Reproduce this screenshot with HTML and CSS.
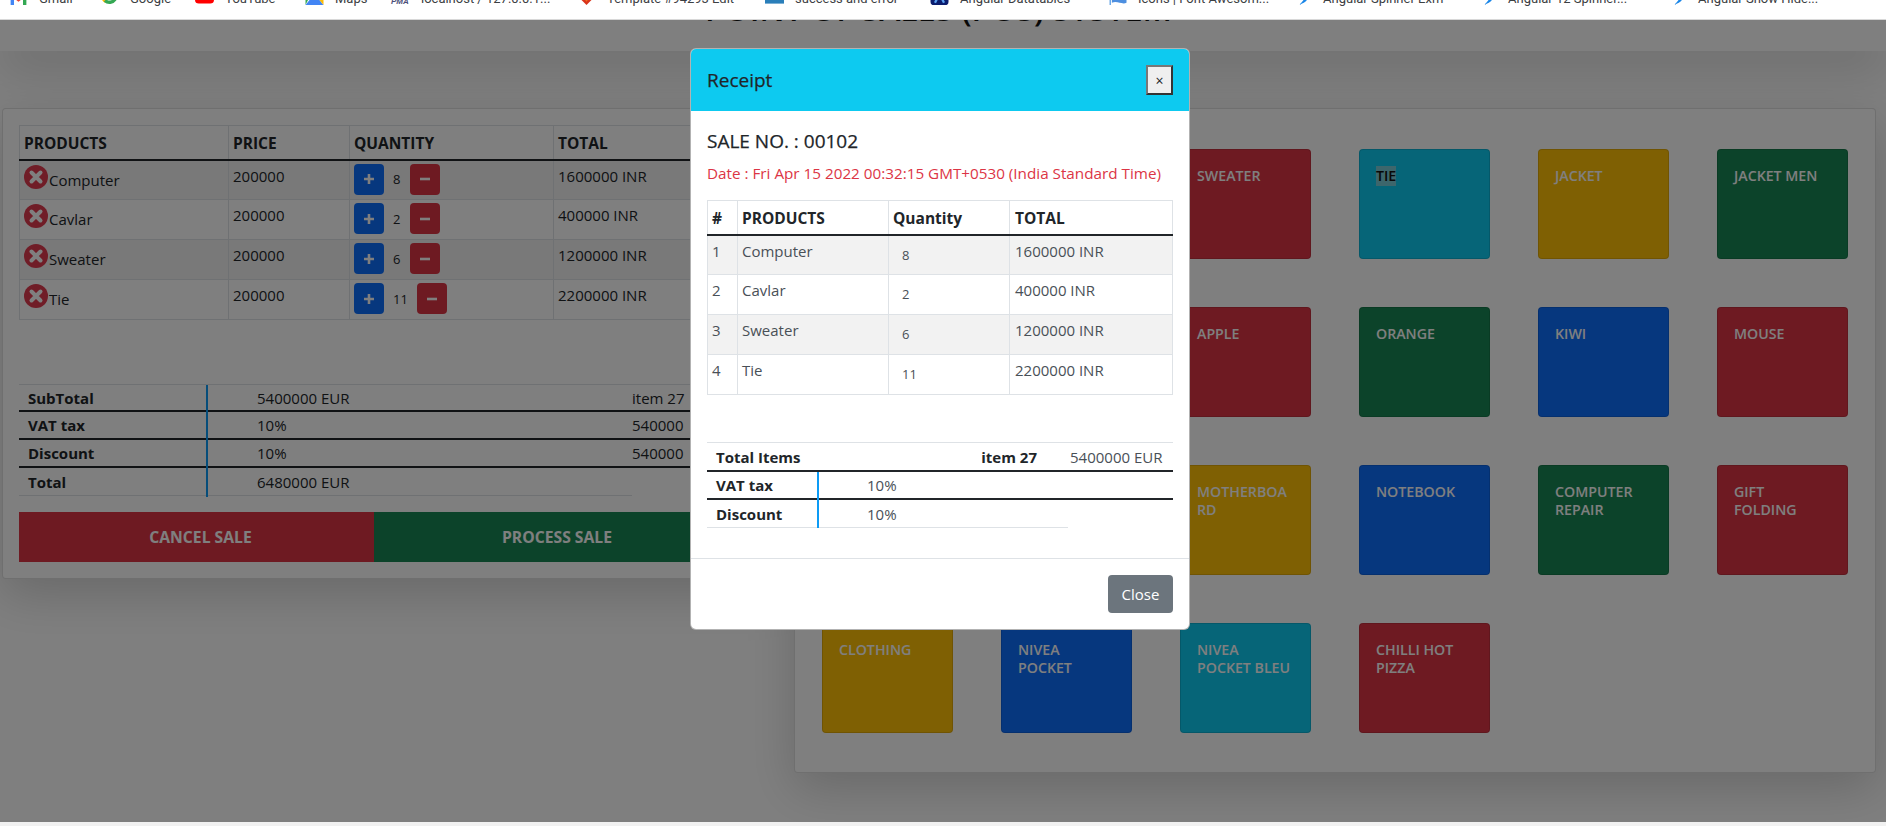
FILE: index.html
```html
<!DOCTYPE html>
<html lang="en">
<head>
<meta charset="utf-8">
<title>Point of Sales (POS) System</title>
<link rel="stylesheet" href="styles.css">
</head>
<body>
<div class="app">
  <nav class="bookmarks">
    <a class="bm"><svg class="fav" viewBox="0 0 16 16"><path d="M1 16V5l3 2v9z" fill="#4285f4"/><path d="M15 16V5l-3 2v9z" fill="#34a853"/><path d="M1 5l7 5 7-5v3l-7 5-7-5z" fill="#ea4335"/></svg><span>Gmail</span></a>
    <a class="bm"><svg class="fav" viewBox="0 0 16 16"><path d="M2 8a6 6 0 0 0 3 5" fill="none" stroke="#fbbc05" stroke-width="3"/><path d="M4 12a6 6 0 0 0 9-1" fill="none" stroke="#34a853" stroke-width="3"/></svg><span>Google</span></a>
    <a class="bm"><svg class="fav fav-yt" viewBox="0 0 20 16"><rect x="0" y="0" width="20" height="16" rx="4" fill="#ff0000"/></svg><span>YouTube</span></a>
    <a class="bm"><svg class="fav" viewBox="0 0 16 16"><path d="M0 16L8 6l8 10z" fill="#4285f4"/><path d="M0 16V9l5-3z" fill="#34a853"/><path d="M8 6l8 10V6z" fill="#fbbc05"/></svg><span>Maps</span></a>
    <a class="bm bm-pma"><span class="pma">PMA</span><span>localhost / 127.0.0.1...</span></a>
    <a class="bm"><svg class="fav" viewBox="0 0 16 16"><path d="M0 8l8 8 8-8z" fill="#d9341b"/><path d="M4 8l4 5 4-5z" fill="#f26b1d"/></svg><span>Template #94293 Edit</span></a>
    <a class="bm"><svg class="fav fav-sq" viewBox="0 0 20 16"><rect width="20" height="16" fill="#2a7fba"/></svg><span>success and error</span></a>
    <a class="bm"><svg class="fav" viewBox="0 0 16 16"><rect width="16" height="16" rx="3" fill="#0b1c6e"/><path d="M4 14l4-8 4 8" fill="none" stroke="#5aa0f0" stroke-width="2"/></svg><span>Angular Datatables</span></a>
    <a class="bm"><svg class="fav" viewBox="0 0 16 16"><path d="M1 0h1v16H1z" fill="#3d8ce0"/><path d="M3 0h13v14c-4 2-8-2-13 0z" fill="#4d8fe0"/></svg><span>Icons | Font Awesom...</span></a>
    <a class="bm"><svg class="fav fav-sw" viewBox="0 0 13 18"><path d="M6 11h3c-1 3-4 5-9 7 2-2 4-4 6-7z" fill="#1a86e8"/></svg><span>Angular Spinner Exm</span></a>
    <a class="bm"><svg class="fav fav-sw" viewBox="0 0 13 18"><path d="M6 11h3c-1 3-4 5-9 7 2-2 4-4 6-7z" fill="#1a86e8"/></svg><span>Angular 12 Spinner...</span></a>
    <a class="bm"><svg class="fav fav-sw" viewBox="0 0 13 18"><path d="M6 11h3c-1 3-4 5-9 7 2-2 4-4 6-7z" fill="#1a86e8"/></svg><span>Angular Show Hide...</span></a>
  </nav>

  <div class="page">
    <header class="page-head"><h1 class="page-title">POINT OF SALES (POS) SYSTEM</h1></header>
    <main class="pos">
      <section class="card cart">
        <table class="grid-table cart-table">
          <colgroup><col class="c-name"><col class="c-price"><col class="c-qty"><col></colgroup>
          <thead><tr><th>PRODUCTS</th><th>PRICE</th><th>QUANTITY</th><th>TOTAL</th></tr></thead>
          <tbody>
            <tr><td><div class="name-cell"><svg class="remove" viewBox="0 0 24 24"><circle cx="12" cy="12" r="12"/><path d="M7.5 7.5l9 9M16.5 7.5l-9 9"/></svg><span>Computer</span></div></td><td>200000</td><td><div class="qty"><button class="qbtn plus"><svg viewBox="0 0 12 12"><path d="M6 1v10M1 6h10"/></svg></button><span class="qnum">8</span><button class="qbtn minus"><svg viewBox="0 0 12 12"><path d="M1 6h10"/></svg></button></div></td><td>1600000 INR</td></tr>
            <tr><td><div class="name-cell"><svg class="remove" viewBox="0 0 24 24"><circle cx="12" cy="12" r="12"/><path d="M7.5 7.5l9 9M16.5 7.5l-9 9"/></svg><span>Cavlar</span></div></td><td>200000</td><td><div class="qty"><button class="qbtn plus"><svg viewBox="0 0 12 12"><path d="M6 1v10M1 6h10"/></svg></button><span class="qnum">2</span><button class="qbtn minus"><svg viewBox="0 0 12 12"><path d="M1 6h10"/></svg></button></div></td><td>400000 INR</td></tr>
            <tr><td><div class="name-cell"><svg class="remove" viewBox="0 0 24 24"><circle cx="12" cy="12" r="12"/><path d="M7.5 7.5l9 9M16.5 7.5l-9 9"/></svg><span>Sweater</span></div></td><td>200000</td><td><div class="qty"><button class="qbtn plus"><svg viewBox="0 0 12 12"><path d="M6 1v10M1 6h10"/></svg></button><span class="qnum">6</span><button class="qbtn minus"><svg viewBox="0 0 12 12"><path d="M1 6h10"/></svg></button></div></td><td>1200000 INR</td></tr>
            <tr><td><div class="name-cell"><svg class="remove" viewBox="0 0 24 24"><circle cx="12" cy="12" r="12"/><path d="M7.5 7.5l9 9M16.5 7.5l-9 9"/></svg><span>Tie</span></div></td><td>200000</td><td><div class="qty"><button class="qbtn plus"><svg viewBox="0 0 12 12"><path d="M6 1v10M1 6h10"/></svg></button><span class="qnum">11</span><button class="qbtn minus"><svg viewBox="0 0 12 12"><path d="M1 6h10"/></svg></button></div></td><td>2200000 INR</td></tr>
          </tbody>
        </table>

        <table class="sum-table">
          <colgroup><col class="s-label"><col class="s-val"><col></colgroup>
          <tbody>
            <tr><th>SubTotal</th><td>5400000 EUR</td><td class="s-extra">item 27</td></tr>
            <tr><th>VAT tax</th><td>10%</td><td class="s-extra">540000</td></tr>
            <tr><th>Discount</th><td>10%</td><td class="s-extra">540000</td></tr>
            <tr class="s-last"><th>Total</th><td>6480000 EUR</td><td class="s-extra"></td></tr>
          </tbody>
        </table>

        <div class="sale-actions">
          <button class="sale-btn cancel">CANCEL SALE</button>
          <button class="sale-btn process">PROCESS SALE</button>
        </div>
      </section>

      <section class="card catalog">
        <div class="tile red"></div><div class="tile yellow"></div><div class="tile red">SWEATER</div><div class="tile cyan"><span class="picked">TIE</span></div><div class="tile yellow">JACKET</div><div class="tile green">JACKET MEN</div>
        <div class="tile green"></div><div class="tile blue"></div><div class="tile red">APPLE</div><div class="tile green">ORANGE</div><div class="tile blue">KIWI</div><div class="tile red">MOUSE</div>
        <div class="tile blue"></div><div class="tile green"></div><div class="tile yellow">MOTHERBOARD</div><div class="tile blue">NOTEBOOK</div><div class="tile green">COMPUTER REPAIR</div><div class="tile red">GIFT FOLDING</div>
        <div class="tile yellow">CLOTHING</div><div class="tile blue">NIVEA POCKET</div><div class="tile cyan">NIVEA POCKET BLEU</div><div class="tile red">CHILLI HOT PIZZA</div>
      </section>
    </main>

    <div class="backdrop">
      <div class="modal">
        <div class="modal-head">
          <h5 class="modal-title">Receipt</h5>
          <button class="modal-x">×</button>
        </div>
        <div class="modal-body">
          <h5 class="sale-no">SALE NO. : 00102</h5>
          <p class="sale-date">Date : Fri Apr 15 2022 00:32:15 GMT+0530 (India Standard Time)</p>
          <table class="grid-table receipt-table">
            <colgroup><col class="r-num"><col class="r-name"><col class="r-qty"><col></colgroup>
            <thead><tr><th>#</th><th>PRODUCTS</th><th>Quantity</th><th>TOTAL</th></tr></thead>
            <tbody>
              <tr><td>1</td><td>Computer</td><td><span class="r-count">8</span></td><td>1600000 INR</td></tr>
              <tr><td>2</td><td>Cavlar</td><td><span class="r-count">2</span></td><td>400000 INR</td></tr>
              <tr><td>3</td><td>Sweater</td><td><span class="r-count">6</span></td><td>1200000 INR</td></tr>
              <tr><td>4</td><td>Tie</td><td><span class="r-count">11</span></td><td>2200000 INR</td></tr>
            </tbody>
          </table>
          <table class="rsum-table">
            <colgroup><col class="rs-label"><col class="rs-val"><col></colgroup>
            <tbody>
              <tr class="rs-first"><th>Total Items</th><th class="rs-items">item 27</th><td class="rs-amount">5400000 EUR</td></tr>
              <tr><th class="rs-rule">VAT tax</th><td class="rs-pct">10%</td><td></td></tr>
              <tr class="rs-last"><th class="rs-rule">Discount</th><td class="rs-pct">10%</td><td class="rs-none"></td></tr>
            </tbody>
          </table>
        </div>
        <div class="modal-foot"><button class="close-btn">Close</button></div>
      </div>
    </div>
  </div>
  <div class="bottom-strip"></div>
</div>
</body>
</html>
```
FILE: styles.css
```css
* { box-sizing: border-box; }
html, body { margin: 0; height: 100%; overflow: hidden; }
body { background: #fff; color: #212529; font-family: "Open Sans", "Noto Sans", sans-serif; font-size: 15px; line-height: 24px; }
button { font-family: inherit; }

.app { height: 826px; display: flex; flex-direction: column; }

/* browser bookmarks bar, cut off by the capture */
.bookmarks { flex: 0 0 20px; height: 20px; background: #fff; border-bottom: 1px solid #d8d8d8; overflow: hidden; position: relative; z-index: 3; display: grid; grid-template-columns: 91px 95px 110px 86px 186px 188px 165px 178px 191px 185px 190px 1fr; padding-left: 9px; font-family: Roboto, "Liberation Sans", sans-serif; font-size: 13px; color: #3c4043; }
.bm { display: flex; align-items: flex-end; height: 18px; margin-top: -10px; gap: 11px; white-space: nowrap; line-height: 18px; }
.fav { flex: 0 0 19px; width: 19px; height: 18px; margin-bottom: 3px; }
.fav-sw { flex-basis: 13px; width: 13px; }
.pma { flex: 0 0 19px; font: italic bold 8px/8px "Liberation Sans", sans-serif; color: #4b4f78; margin-bottom: 2px; }

.page { flex: 1; position: relative; overflow: hidden; }
.bottom-strip { flex: 0 0 4px; background: #f1f1f1; position: relative; z-index: 3; }

.page-head { display: flow-root; height: 31px; background: #fff; box-shadow: 0 1rem 3rem rgba(0,0,0,.175); position: relative; z-index: 1; text-align: center; padding-right: 9px; }
.page-title { margin: -30px 0 0; font-size: 32px; line-height: 38px; font-weight: 600; color: #111; white-space: nowrap; }

.pos { display: flex; align-items: flex-start; gap: 12px; padding: 57px 0 0 2px; }
.card { background: #fff; border: 1px solid rgba(0,0,0,.125); border-radius: 4px; box-shadow: 0 1rem 3rem rgba(0,0,0,.175); }
.cart { flex: 0 0 780px; padding: 16px; }
.catalog { flex: 0 0 1081px; display: grid; grid-template-columns: repeat(6, 131px); grid-auto-rows: 110px; gap: 48px; padding: 40px 27px 39px; }

/* bordered tables */
.grid-table { border-collapse: collapse; table-layout: fixed; }
.grid-table th, .grid-table td { border: 1px solid #dee2e6; padding: 3px 4px 0; vertical-align: top; text-align: left; height: 40px; }
.grid-table th { font-weight: 700; height: 34px; padding-top: 5px; border-bottom: 2px solid #212529; color: #212529; font-size: 15.5px; }
.grid-table td { color: #212529; }
.grid-table tbody tr:nth-child(odd) td { background: #f2f2f2; }

.cart-table { width: 746px; }
.c-name { width: 209px; }
.c-price { width: 121px; }
.c-qty { width: 204px; }
.name-cell { display: flex; align-items: flex-start; }
.remove { width: 24px; height: 24px; flex: none; margin-top: 1px; }
.remove circle { fill: #e03a4e; }
.remove path { stroke: #fff; stroke-width: 4; stroke-linecap: round; fill: none; }
.name-cell span { margin-top: 4px; margin-left: 1px; }
.qty { display: flex; align-items: center; }
.qbtn { width: 30px; height: 31px; border: 0; border-radius: 4px; padding: 0; display: flex; align-items: center; justify-content: center; }
.qbtn svg { width: 12px; height: 12px; stroke: #fff; stroke-width: 2.6; fill: none; }
.plus { background: #0d6efd; }
.minus { background: #dc3545; }
.qnum { padding: 0 9.5px 0 9px; font-size: 13px; }

.sum-table { width: 746px; margin-top: 64px; border-collapse: separate; border-spacing: 0; table-layout: fixed; }
.s-label { width: 189px; }
.s-val { width: 424px; }
.sum-table th, .sum-table td { padding: 0; height: 28px; line-height: 24px; text-align: left; border-bottom: 2px solid #212529; }
.sum-table tr:first-child th, .sum-table tr:first-child td { border-top: 1px solid #dee2e6; }
.sum-table th { padding-left: 9px; font-weight: 700; position: relative; font-size: 15px; }
.sum-table th::after { content: ""; position: absolute; top: 0; bottom: -2px; right: 0; width: 2px; background: #0d9bf5; }
.sum-table td { padding-left: 49px; }
.sum-table td.s-extra { padding-left: 0; }
.s-last th, .s-last td { border-bottom: 1px solid #dee2e6; }
.sum-table .s-last td.s-extra { border-bottom: 0; }

.sale-actions { display: flex; margin-top: 16px; }
.sale-btn { height: 50px; border: 0; color: #fff; font-size: 15.7px; font-weight: 700; }
.cancel { flex: 0 0 355px; background: #dc3545; padding-left: 14px; }
.process { flex: 0 0 366px; background: #198754; }

/* catalogue tiles */
.tile { padding: 17px 19px 0 16px; border-radius: 4px; border: 1px solid rgba(0,0,0,.12); color: #fff; font-size: 14.2px; font-weight: 600; line-height: 18px; overflow-wrap: anywhere; }
.red { background: #dc3545; }
.blue { background: #0d6efd; }
.green { background: #198754; }
.yellow { background: #ffc107; }
.cyan { background: #0dcaf0; }
.picked { display: inline-block; background: #7accd8; color: #111; line-height: 20px; margin-top: -1px; }

/* modal */
.backdrop { position: absolute; inset: 0; background: rgba(0,0,0,.5); z-index: 2; padding: 28px 0 0 690px; }
.modal { width: 500px; background: #fff; border: 1px solid rgba(0,0,0,.3); border-radius: 6px; overflow: hidden; }
.modal-head { height: 62px; background: #0dcaf0; display: flex; align-items: center; justify-content: space-between; padding: 0 16px; }
.modal-title { margin: 0; font-size: 19px; line-height: 28px; font-weight: 500; color: #212529; -webkit-text-stroke: .25px #212529; }
.modal-x { width: 27px; height: 30px; padding: 0; background: #efefef; border: 2px solid; border-color: #777 #333 #333 #777; font-size: 14px; color: #212529; }
.modal-body { padding: 16px 16px 30px; }
.sale-no { margin: 0 0 8px; font-size: 19px; line-height: 28px; font-weight: 500; -webkit-text-stroke: .25px #212529; }
.sale-date { margin: 0 0 16px; color: #dc3545; font-size: 15.25px; line-height: 21px; white-space: nowrap; }
.receipt-table { width: 466px; }
.r-num { width: 30px; }
.r-name { width: 151px; }
.r-qty { width: 121px; }
.receipt-table td { color: #495057; }
.receipt-table th:last-child, .receipt-table td:last-child { padding-left: 5px; }
.r-count { display: block; padding: 4px 0 0 9px; font-size: 13px; line-height: 24px; }

.rsum-table { width: 466px; margin-top: 47px; border-collapse: separate; border-spacing: 0; table-layout: fixed; }
.rs-label { width: 112px; }
.rs-val { width: 249px; }
.rsum-table th, .rsum-table td { height: 28px; padding: 0; text-align: left; line-height: 26px; border-bottom: 2px solid #212529; }
.rsum-table th { padding-left: 9px; font-weight: 700; font-size: 15px; }
.rs-first th, .rs-first td { height: 30px; border-top: 1px solid #dee2e6; }
.rsum-table .rs-items { padding: 0 31px 0 0; text-align: right; }
.rsum-table .rs-amount { padding-left: 2px; color: #495057; white-space: nowrap; }
.rs-rule { position: relative; }
.rs-rule::after { content: ""; position: absolute; top: 0; bottom: -2px; right: 0; width: 2px; background: #0d9bf5; }
.rsum-table .rs-pct { padding-left: 48px; color: #495057; }
.rs-last th, .rs-last td { border-bottom: 1px solid #dee2e6; }
.rsum-table .rs-last .rs-none { border-bottom: 0; }
.rs-last .rs-rule::after { bottom: -1px; }

.modal-foot { border-top: 1px solid #dee2e6; padding: 16px; display: flex; justify-content: flex-end; }
.close-btn { width: 65px; height: 38px; border: 0; border-radius: 4px; background: #6c757d; color: #fff; font-size: 15px; }
```
